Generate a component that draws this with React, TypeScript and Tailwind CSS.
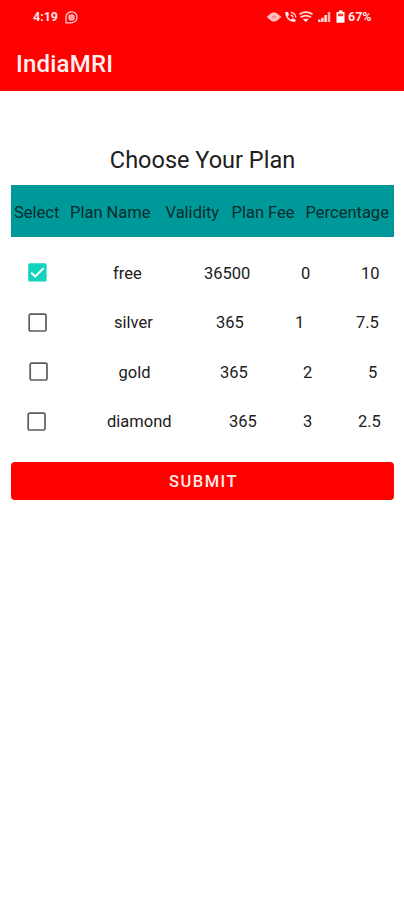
const plans = [
  { name: 'free', validity: '36500', fee: '0', pct: '10', checked: true, cols: 'pl-[28px] grid-cols-[85px_91px_97px_60px_auto]' },
  { name: 'silver', validity: '365', fee: '1', pct: '7.5', checked: false, cols: 'pl-[28px] grid-cols-[86px_102px_79px_61px_auto]' },
  { name: 'gold', validity: '365', fee: '2', pct: '5', checked: false, cols: 'pl-[29px] grid-cols-[89.5px_101.5px_83px_65px_auto]' },
  { name: 'diamond', validity: '365', fee: '3', pct: '2.5', checked: false, cols: 'pl-[27px] grid-cols-[80px_122px_74px_55px_auto]' },
];

function Checkbox({ checked }: { checked: boolean }) {
  return (
    <svg width="19" height="19" viewBox="0 0 19 19" role="checkbox" aria-checked={checked}>
      {checked ? (
        <>
          <rect x="0.2" y="0.2" width="18.4" height="18.4" rx="1.5" fill="#12d3bd" />
          <path d="M3.2 9.6 7.2 13.5 15.7 5" fill="none" stroke="#fff" strokeWidth="2" />
        </>
      ) : (
        <rect x="1.2" y="1.2" width="16.8" height="16.8" rx="1.3" fill="none" stroke="#5c5c5c" strokeWidth="1.7" />
      )}
    </svg>
  );
}

function StatusIcons() {
  return (
    <svg width="80" height="16" viewBox="266 9 80 16" fill="none" stroke="#ffd9d6">
      <path d="M266.5 17l3-2.500h9l3 2.500-3 2.500h-9z" fill="#ffaaa6" stroke="none" />
      <circle cx="274" cy="17" r="4" fill="#ffb5b1" strokeWidth="1.2" />
      <path d="M272 17h4" strokeWidth="1.4" stroke="#ff7a74" />
      <path d="M285.3 12h2.800l.9 3.2-1.4 1.300c.8 1.400 1.900 2.500 3.300 3.200l1.300-1.400 3.300.9v2.600c-5.800.6-10.700-4-10.200-9.800z" fill="#ffe9e7" stroke="none" />
      <path d="M290.800 12.300q4.600.6 5 5.200M290.800 15q2 .4 2.400 2.500" strokeWidth="1.300" />
      <path d="M299.500 14.300q6.500-4.400 13 0M300.500 17.300q5.500-3.400 10.500 0" strokeWidth="1.900" />
      <path d="M302.500 18.800h6.500l-3.200 3.400z" fill="#ffd9d6" stroke="none" />
      <path d="M319.300 19.500v2.500" strokeWidth="2.500" />
      <path d="M322.400 17.700v4.300" strokeWidth="2.500" />
      <path d="M325.600 15v7" strokeWidth="2.600" />
      <path d="M329 12v10" strokeWidth="2.500" stroke="#ffb5b1" />
      <path d="M339 10.500h3.500v1.500h2v10.700h-8V12h2.500z" fill="#fff" stroke="none" />
      <path d="M338 13.700h5v2.500h-5z" fill="#ff3b32" stroke="none" />
    </svg>
  );
}

export default function App() {
  return (
    <div className="h-[900px] w-[404px] overflow-hidden bg-white font-[Roboto,sans-serif] text-[#202020]">
      <header className="h-[91px] bg-[#ff0000]">
        <div className="flex h-[34px] items-center pl-[33px] pr-[32px] text-[12.500px] font-bold leading-[14px] text-[#ffe6e4]">
          <span className="w-[32px] whitespace-nowrap">4:19</span>
          <svg width="13" height="13" viewBox="0 0 13 13" fill="none" stroke="#ffd0cc">
            <path d="M1 11.800V6.500a5.500 5.500 0 1 1 5.500 5.300z" strokeWidth="1.300" />
            <rect x="4" y="4" width="5" height="5" rx="1" fill="#ff9a95" strokeWidth="1" />
          </svg>
          <div className="ml-auto flex items-center">
            <StatusIcons />
            <span className="ml-[2px] w-[24px] whitespace-nowrap">67%</span>
          </div>
        </div>
        <h1 className="pl-[16px] pt-[16px] text-[24px] font-medium leading-[28px] tracking-[0.200px] text-[#fff1ef]">IndiaMRI</h1>
      </header>
      <main>
        <h2 className="pl-px pt-[54px] text-center text-[23.500px] leading-[30px]">Choose Your Plan</h2>
        <div className="ml-[11px] mr-[10px] mt-[10px] grid h-[52px] w-[383px] grid-cols-[56px_95.500px_66px_74px_auto] items-center whitespace-nowrap bg-[#009999] pl-[3px] pt-[5px] text-[16.500px] text-[#062c2c]">
          <span>Select</span>
          <span>Plan Name</span>
          <span>Validity</span>
          <span>Plan Fee</span>
          <span>Percentage</span>
        </div>
        <div className="pt-[11px]">
          {plans.map((p) => (
            <div key={p.name} className={`grid h-[49.500px] items-center whitespace-nowrap text-[16.500px] ${p.cols}`}>
              <Checkbox checked={p.checked} />
              <span className="pt-[3px]">{p.name}</span>
              <span className="pt-[3px]">{p.validity}</span>
              <span className="pt-[3px]">{p.fee}</span>
              <span className="pt-[3px]">{p.pct}</span>
            </div>
          ))}
        </div>
        <button className="ml-[11px] mt-[16px] flex h-[38px] w-[383px] items-center justify-center rounded-[4px] bg-[#ff0000] pl-[2px] pt-[2px] text-[16.500px] font-medium tracking-[1.500px] text-[#ffe9e7]">
          SUBMIT
        </button>
      </main>
    </div>
  );
}
